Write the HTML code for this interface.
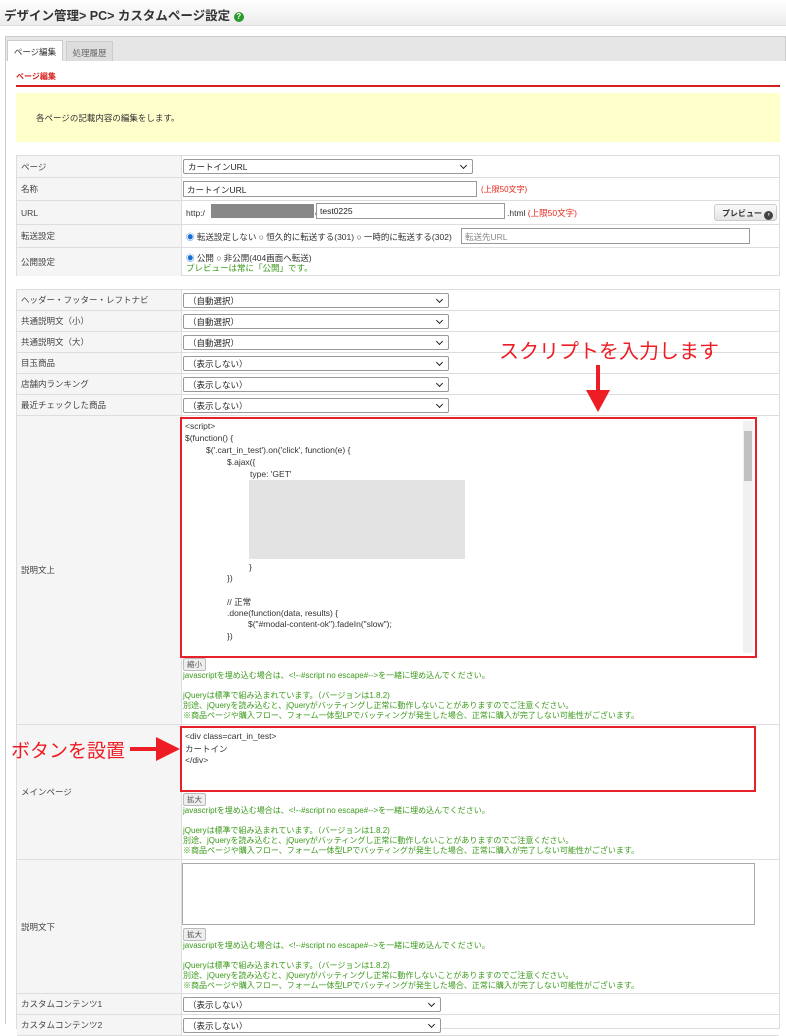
<!DOCTYPE html>
<html><head><meta charset="utf-8"><style>
*{margin:0;padding:0;box-sizing:border-box}
body{width:786px;height:1024px;overflow:hidden;background:#fff;font-family:"Liberation Sans","Noto Sans CJK JP",sans-serif;font-size:9px;color:#333;position:relative}
.a{position:absolute;white-space:nowrap}
.bar{left:0;top:0;width:786px;height:26px;background:linear-gradient(#fff,#ececec);border-bottom:1px solid #ddd}
.panel{left:5px;top:36px;width:781px;height:988px;border:1px solid #ccc;background:#e6e6e6}
.content{left:6px;top:61px;width:780px;height:963px;background:#fff}
.tab{height:21px;border:1px solid #ccc;border-bottom:none;font-size:8.5px;padding-top:5px;text-align:center;background:#ddd;color:#666}
.tbl{left:16px;width:764px;border:1px solid #ddd}
.row{position:absolute;left:0;width:762px;border-bottom:1px solid #ddd}
.lab{position:absolute;left:0;top:0;bottom:0;width:165px;background:#f5f5f5;border-right:1px solid #ddd;padding-left:4px;display:flex;align-items:center;font-size:8.5px;color:#444}
.sel{position:absolute;height:15px;border:1px solid #999;border-radius:2px;background:#fff;font-size:8.5px;padding:1px 4px;color:#222}
.sel:after{content:"";position:absolute;right:6px;top:3px;width:4px;height:4px;border-right:1.5px solid #222;border-bottom:1.5px solid #222;transform:rotate(45deg)}
.inp{position:absolute;height:16px;border:1px solid #999;background:#fff;font-size:8.5px;padding:2px 3px;color:#222}
.g{color:#3a9a1a;font-size:8px;line-height:10px}
.btn{position:absolute;width:23px;height:13px;border:1px solid #bbb;border-radius:2px;background:#eee;font-size:7.5px;text-align:center;color:#555;line-height:11px}
.code{font-size:8.5px;color:#333}
.red{color:#e8281e}
</style></head><body>
<div class="a bar"></div>
<div class="a" style="left:4px;top:5px;font-size:12.5px;font-weight:bold;color:#333">デザイン管理&gt; PC&gt; カスタムページ設定 <span style="display:inline-block;width:10px;height:10px;border-radius:50%;background:#2a9a2a;color:#fff;font-size:8px;text-align:center;line-height:10px;vertical-align:1px">?</span></div>
<div class="a panel"></div>
<div class="a tab" style="left:7px;top:40px;width:56px;background:#fff;color:#333;height:22px">ページ編集</div>
<div class="a tab" style="left:66px;top:41px;width:47px">処理履歴</div>
<div class="a content"></div>
<div class="a" style="left:16px;top:71px;font-size:8px;font-weight:bold;color:#d6201e">ページ編集</div>
<div class="a" style="left:16px;top:85px;width:764px;height:2px;background:#d6201e"></div>
<div class="a" style="left:16px;top:93px;width:764px;height:49px;background:#ffffcc"></div>
<div class="a" style="left:36px;top:112px;font-size:8.5px">各ページの記載内容の編集をします。</div>

<div class="a tbl" style="top:155px;height:121px">
 <div class="row" style="top:0;height:22px"><div class="lab">ページ</div><div class="sel" style="left:166px;top:3px;width:290px">カートインURL</div></div>
 <div class="row" style="top:22px;height:23px"><div class="lab">名称</div><div class="inp" style="left:166px;top:3px;width:294px">カートインURL</div><div class="a red" style="left:464px;top:6px;font-size:8px">(上限50文字)</div></div>
 <div class="row" style="top:45px;height:24px"><div class="lab">URL</div><div class="a" style="left:169px;top:7px;font-size:8.5px">http:/</div><div class="a" style="left:194px;top:3px;width:103px;height:14px;background:#888"></div><div class="a" style="left:298px;top:6px;font-size:9px;color:#666">/</div><div class="inp" style="left:299px;top:2px;width:189px">test0225</div><div class="a" style="left:490px;top:6px;font-size:8.5px">.html <span class="red">(上限50文字)</span></div><div class="a" style="left:697px;top:3px;width:63px;height:17px;border:1px solid #ccc;border-radius:3px;background:linear-gradient(#fafafa,#e4e4e4);font-size:8px;font-weight:bold;padding:3px 0 0 7px;color:#333">プレビュー <span style="display:inline-block;width:9px;height:9px;border-radius:50%;background:#444;color:#fff;font-size:6px;text-align:center;line-height:9px">›</span></div></div>
 <div class="row" style="top:69px;height:23px"><div class="lab">転送設定</div><div class="a" style="left:169px;top:6px;font-size:8.5px"><span style="color:#1a6ed8">◉</span> 転送設定しない ○ 恒久的に転送する(301) ○ 一時的に転送する(302)</div><div class="inp" style="left:444px;top:3px;width:289px;color:#888">転送先URL</div></div>
 <div class="row" style="top:92px;height:28px;border:none"><div class="lab">公開設定</div><div class="a" style="left:169px;top:4px;font-size:8.5px"><span style="color:#1a6ed8">◉</span> 公開 ○ 非公開(404画面へ転送)</div><div class="a" style="left:169px;top:14px;font-size:8.5px;color:#3a9a1a">プレビューは常に「公開」です。</div></div>
</div>

<div class="a tbl" style="top:289px;height:740px">
 <div class="row" style="top:0;height:21px"><div class="lab">ヘッダー・フッター・レフトナビ</div><div class="sel" style="left:166px;top:3px;width:266px">（自動選択）</div></div>
 <div class="row" style="top:21px;height:21px"><div class="lab">共通説明文（小）</div><div class="sel" style="left:166px;top:3px;width:266px">（自動選択）</div></div>
 <div class="row" style="top:42px;height:21px"><div class="lab">共通説明文（大）</div><div class="sel" style="left:166px;top:3px;width:266px">（自動選択）</div></div>
 <div class="row" style="top:63px;height:21px"><div class="lab">目玉商品</div><div class="sel" style="left:166px;top:3px;width:266px">（表示しない）</div></div>
 <div class="row" style="top:84px;height:21px"><div class="lab">店舗内ランキング</div><div class="sel" style="left:166px;top:3px;width:266px">（表示しない）</div></div>
 <div class="row" style="top:105px;height:21px"><div class="lab">最近チェックした商品</div><div class="sel" style="left:166px;top:3px;width:266px">（表示しない）</div></div>
 <div class="row" style="top:126px;height:309px"><div class="lab">説明文上</div></div>
 <div class="row" style="top:435px;height:135px"><div class="lab">メインページ</div></div>
 <div class="row" style="top:570px;height:134px"><div class="lab">説明文下</div></div>
 <div class="row" style="top:704px;height:21px"><div class="lab">カスタムコンテンツ1</div><div class="sel" style="left:166px;top:3px;width:258px">（表示しない）</div></div>
 <div class="row" style="top:725px;height:21px"><div class="lab">カスタムコンテンツ2</div><div class="sel" style="left:166px;top:3px;width:258px">（表示しない）</div></div>
</div>

<div class="a" style="left:180px;top:417px;width:577px;height:241px;border:2px solid #e8202a;background:#fff"></div>
<div class="a" style="left:743px;top:421px;width:10px;height:232px;background:#f1f1f1"></div>
<div class="a" style="left:744px;top:431px;width:8px;height:50px;background:#c1c1c1"></div>
<div class="a" style="left:249px;top:480px;width:216px;height:79px;background:#e3e3e3"></div>
<div class="a code" style="left:185px;top:421px">&lt;script&gt;</div>
<div class="a code" style="left:185px;top:433px">$(function() {</div>
<div class="a code" style="left:206px;top:445px">$('.cart_in_test').on('click', function(e) {</div>
<div class="a code" style="left:227px;top:457px">$.ajax({</div>
<div class="a code" style="left:250px;top:469px">type: 'GET'</div>
<div class="a code" style="left:249px;top:562px">}</div>
<div class="a code" style="left:227px;top:573px">})</div>
<div class="a code" style="left:227px;top:596px">// 正常</div>
<div class="a code" style="left:227px;top:608px">.done(function(data, results) {</div>
<div class="a code" style="left:248px;top:619px">$("#modal-content-ok").fadeIn("slow");</div>
<div class="a code" style="left:227px;top:631px">})</div>
<div class="btn" style="left:183px;top:658px">縮小</div>
<div class="a g" style="left:183px;top:671px">javascriptを埋め込む場合は、&lt;!--#script no escape#--&gt;を一緒に埋め込んでください。<br><br>jQueryは標準で組み込まれています。（バージョンは1.8.2)<br>別途、jQueryを読み込むと、jQueryがバッティングし正常に動作しないことがありますのでご注意ください。<br>※商品ページや購入フロー、フォーム一体型LPでバッティングが発生した場合、正常に購入が完了しない可能性がございます。</div>

<div class="a" style="left:180px;top:726px;width:576px;height:66px;border:2px solid #e8202a;background:#fff"></div>
<div class="a code" style="left:185px;top:731px">&lt;div class=cart_in_test&gt;</div>
<div class="a code" style="left:185px;top:743px">カートイン</div>
<div class="a code" style="left:185px;top:755px">&lt;/div&gt;</div>
<div class="btn" style="left:183px;top:793px">拡大</div>
<div class="a g" style="left:183px;top:806px">javascriptを埋め込む場合は、&lt;!--#script no escape#--&gt;を一緒に埋め込んでください。<br><br>jQueryは標準で組み込まれています。（バージョンは1.8.2)<br>別途、jQueryを読み込むと、jQueryがバッティングし正常に動作しないことがありますのでご注意ください。<br>※商品ページや購入フロー、フォーム一体型LPでバッティングが発生した場合、正常に購入が完了しない可能性がございます。</div>

<div class="a" style="left:182px;top:863px;width:573px;height:62px;border:1px solid #aaa;background:#fff"></div>
<div class="btn" style="left:183px;top:928px">拡大</div>
<div class="a g" style="left:183px;top:941px">javascriptを埋め込む場合は、&lt;!--#script no escape#--&gt;を一緒に埋め込んでください。<br><br>jQueryは標準で組み込まれています。（バージョンは1.8.2)<br>別途、jQueryを読み込むと、jQueryがバッティングし正常に動作しないことがありますのでご注意ください。<br>※商品ページや購入フロー、フォーム一体型LPでバッティングが発生した場合、正常に購入が完了しない可能性がございます。</div>

<div class="a" style="left:499px;top:335px;font-size:20px;color:#ee1c24">スクリプトを入力します</div>
<div class="a" style="left:596px;top:365px;width:4px;height:26px;background:#ee1c24"></div>
<div class="a" style="left:586px;top:390px;width:0;height:0;border-left:12px solid transparent;border-right:12px solid transparent;border-top:22px solid #ee1c24"></div>
<div class="a" style="left:11px;top:736px;font-size:19px;color:#ee1c24">ボタンを設置</div>
<div class="a" style="left:130px;top:747px;width:28px;height:4px;background:#ee1c24"></div>
<div class="a" style="left:156px;top:737px;width:0;height:0;border-top:12px solid transparent;border-bottom:12px solid transparent;border-left:24px solid #ee1c24"></div>
</body></html>
